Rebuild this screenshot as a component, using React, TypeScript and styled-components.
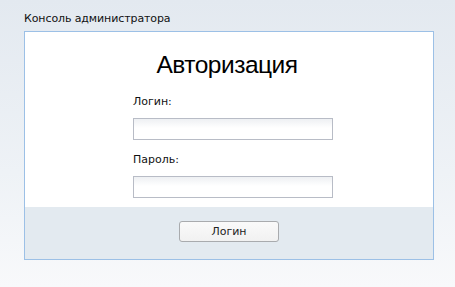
import React from 'react';
import styled, { createGlobalStyle } from 'styled-components';

const GlobalStyle = createGlobalStyle`
  html, body {
    margin: 0;
    padding: 0;
  }
  body {
    width: 455px;
    height: 287px;
    overflow: hidden;
    background: linear-gradient(to bottom, #e3e9f0 0%, #eef2f6 60%, #f8f9fb 100%);
    font-family: 'DejaVu Sans', Tahoma, sans-serif;
    color: #000;
  }
`;

const Page = styled.div`
  padding: 12px 21px 0 24px;
`;

const ConsoleTitle = styled.div`
  font-size: 11px;
  letter-spacing: -0.1px;
  line-height: 14px;
  color: #111;
  margin-bottom: 5px;
  white-space: nowrap;
`;

const Panel = styled.div`
  width: 408px;
  border: 1px solid #9cc0e6;
  background: #fff;
`;

const Body = styled.div`
  display: flex;
  flex-direction: column;
  align-items: center;
  padding: 18px 0 9px;
`;

const Heading = styled.h1`
  margin: 0 0 15px -4px;
  font-family: 'Liberation Sans', Arial, sans-serif;
  font-size: 24.5px;
  letter-spacing: -0.5px;
  font-weight: normal;
  line-height: 30px;
  color: #000;
`;

const Field = styled.div`
  width: 200px;
  display: flex;
  flex-direction: column;
  margin-left: 8px;

  & + & {
    margin-top: 13px;
  }
`;

const Label = styled.label`
  font-size: 11px;
  line-height: 14px;
  margin-bottom: 9px;
  color: #111;
`;

const Input = styled.input`
  box-sizing: border-box;
  width: 200px;
  height: 22px;
  border: 1px solid #b8bcc6;
  background: linear-gradient(to bottom, #eef0f3 0%, #ffffff 45%);
  outline: none;
  padding: 0 4px;
  font: 12px 'DejaVu Sans', Tahoma, sans-serif;
`;

const Footer = styled.div`
  background: #e3eaf0;
  height: 52px;
  display: flex;
  justify-content: center;
  align-items: flex-start;
  padding-top: 14px;
  box-sizing: border-box;
`;

const Button = styled.button`
  width: 100px;
  height: 21px;
  border: 1px solid #a9abae;
  border-radius: 3px;
  background: linear-gradient(to bottom, #fafafa 0%, #f1f1f1 100%);
  font: 11px 'DejaVu Sans', Tahoma, sans-serif;
  color: #222;
  padding: 0;
  cursor: pointer;
`;

export default function App() {
  return (
    <>
      <GlobalStyle />
      <Page>
        <ConsoleTitle>Консоль администратора</ConsoleTitle>
        <Panel>
          <Body>
            <Heading>Авторизация</Heading>
            <Field>
              <Label>Логин:</Label>
              <Input type="text" />
            </Field>
            <Field>
              <Label>Пароль:</Label>
              <Input type="password" />
            </Field>
          </Body>
          <Footer>
            <Button>Логин</Button>
          </Footer>
        </Panel>
      </Page>
    </>
  );
}
